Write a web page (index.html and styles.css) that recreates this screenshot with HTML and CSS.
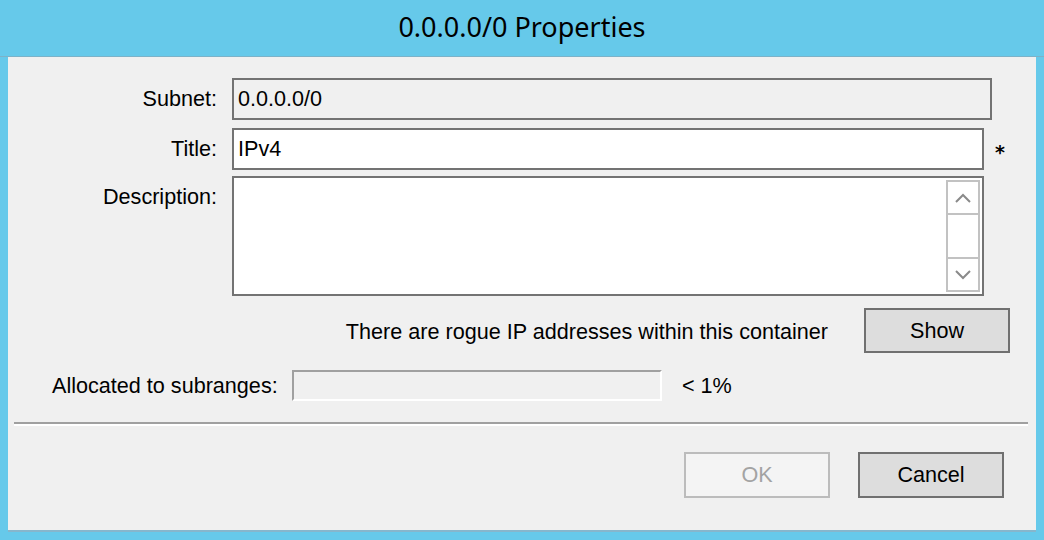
FILE: index.html
```html
<!DOCTYPE html>
<html>
<head>
<meta charset="utf-8">
<link rel="stylesheet" href="styles.css">
</head>
<body>
<div class="window">
  <div class="titlebar">0.0.0.0/0 Properties</div>
  <div class="client">
    <div class="form">
      <div class="lbl">Subnet:</div>
      <div class="field readonly subnet">0.0.0.0/0</div>

      <div class="lbl row2">Title:</div>
      <div class="title-wrap row2">
        <div class="field title">IPv4</div>
        <span class="req">*</span>
      </div>

      <div class="lbl top row3">Description:</div>
      <div class="field memo row3">
        <div class="scrollbar">
          <div class="sb-btn up">
            <svg width="16" height="10" viewBox="0 0 16 10"><polyline points="1,9 8,2 15,9" fill="none" stroke="#8a8a8a" stroke-width="2"/></svg>
          </div>
          <div class="sb-track"></div>
          <div class="sb-btn down">
            <svg width="16" height="10" viewBox="0 0 16 10"><polyline points="1,1 8,8 15,1" fill="none" stroke="#8a8a8a" stroke-width="2"/></svg>
          </div>
        </div>
      </div>
    </div>

    <div class="rogue-row">
      <span class="rogue-text">There are rogue IP addresses within this container</span>
      <button class="btn show">Show</button>
    </div>

    <div class="alloc-row">
      <span class="alloc-label">Allocated to subranges:</span>
      <div class="progress"></div>
      <span class="pct">&lt; 1%</span>
    </div>

    <div class="sep"></div>

    <div class="footer">
      <button class="btn disabled">OK</button>
      <button class="btn">Cancel</button>
    </div>
  </div>
</div>
</body>
</html>
```

FILE: styles.css
```css
html, body {
  margin: 0;
  padding: 0;
}
body {
  background: #66c9ea;
  width: 1044px;
  height: 540px;
  overflow: hidden;
  font-family: "Liberation Sans", Arial, sans-serif;
  font-size: 21.6px;
  color: #000;
}
.window {
  display: flex;
  flex-direction: column;
  height: 532px;
}
.titlebar {
  height: 56px;
  line-height: 54px;
  text-align: center;
  font-family: "Noto Sans", "Open Sans", sans-serif;
  font-size: 27px;
  color: #000;
  border-bottom: 1px solid #7cb2c8;
}
.client {
  flex: 1;
  margin: 0 8px;
  background: #f0f0f0;
  border-bottom: 2px solid #86b6cc;
  padding-top: 21px;
  display: flex;
  flex-direction: column;
}
.form {
  display: grid;
  grid-template-columns: 209px 1fr;
  column-gap: 15px;
  align-items: center;
}
.lbl {
  text-align: right;
}
.row2 {
  margin-top: 8px;
}
.row3 {
  margin-top: 6px;
}
.lbl.top {
  align-self: start;
  margin-top: 14px;
}
.field {
  box-sizing: border-box;
  height: 42px;
  border: 2px solid #737373;
  background: #fff;
  padding: 0 4px;
  display: flex;
  align-items: center;
}
.field.readonly {
  background: #f0f0f0;
}
.subnet {
  width: 760px;
}
.title-wrap {
  display: flex;
  align-items: center;
  gap: 11px;
}
.title {
  width: 752px;
}
.req {
  font-family: "DejaVu Sans", sans-serif;
  font-size: 19px;
  font-weight: bold;
  line-height: 1;
  padding-top: 7px;
}
.memo {
  width: 752px;
  height: 120px;
  padding: 2px;
  justify-content: flex-end;
  align-items: stretch;
}
.scrollbar {
  box-sizing: border-box;
  width: 34px;
  border: 2px solid #c2c2c2;
  display: flex;
  flex-direction: column;
  background: #f0f0f0;
}
.sb-btn {
  height: 31px;
  display: flex;
  align-items: center;
  justify-content: center;
  background: #fff;
}
.sb-btn.up { border-bottom: 2px solid #c2c2c2; }
.sb-btn.down { border-top: 2px solid #c2c2c2; }
.sb-track {
  flex: 1;
  background: #fff;
}
.rogue-row {
  display: flex;
  align-items: center;
  justify-content: flex-end;
  gap: 36px;
  margin-top: 12px;
  padding-right: 26px;
}
.rogue-text {
  padding-top: 2px;
}
.btn {
  box-sizing: border-box;
  width: 146px;
  height: 46px;
  border: 2px solid #707070;
  background: #dddddd;
  font-family: "Liberation Sans", Arial, sans-serif;
  font-size: 21.6px;
  color: #000;
  padding: 0;
}
.show {
  height: 45px;
}
.btn.disabled {
  border-color: #bcbcbc;
  background: #f4f4f4;
  color: #a3a3a3;
}
.alloc-row {
  display: flex;
  align-items: center;
  margin-top: 17px;
  padding-left: 44px;
}
.alloc-label {
  width: 240px;
}
.progress {
  box-sizing: border-box;
  width: 370px;
  height: 31px;
  border-top: 2px solid #a0a0a0;
  border-left: 2px solid #a0a0a0;
  border-bottom: 2px solid #fff;
  border-right: 2px solid #fff;
  margin-right: 20px;
}
.sep {
  margin: 21px 8px 0 6px;
  height: 2px;
  background: #a0a0a0;
  border-bottom: 2px solid #fff;
}
.footer {
  display: flex;
  justify-content: flex-end;
  gap: 28px;
  margin-top: 26px;
  padding-right: 32px;
}
```
